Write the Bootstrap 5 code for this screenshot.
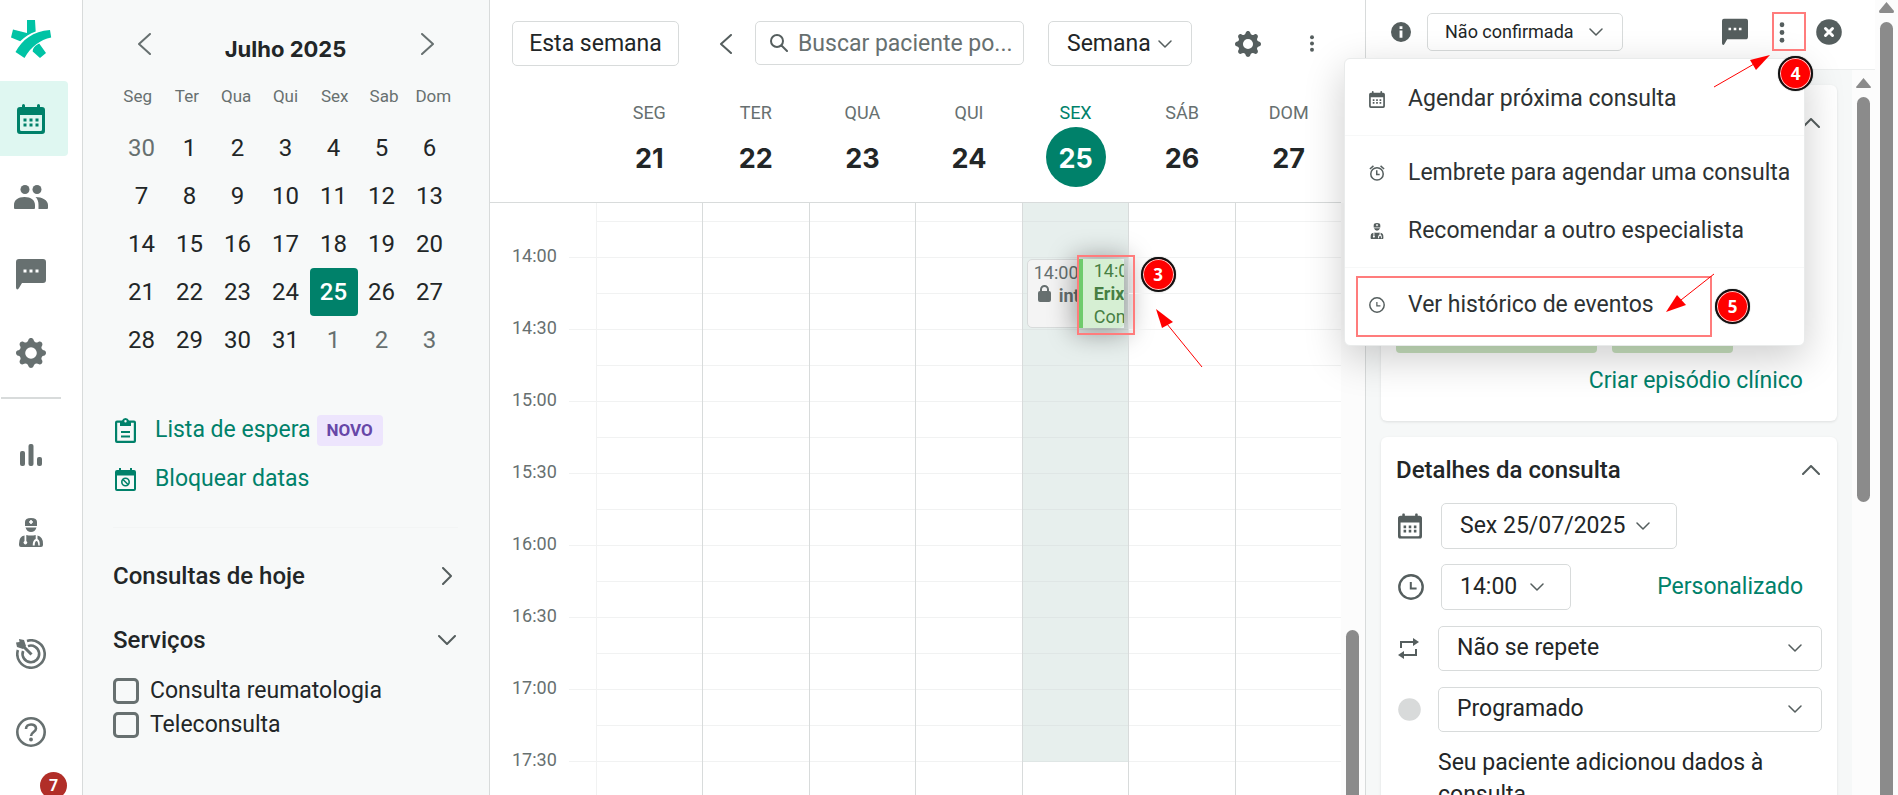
<!DOCTYPE html>
<html lang="pt-BR">
<head>
<meta charset="utf-8">
<meta name="viewport" content="width=device-width, initial-scale=1">
<title>Agenda</title>
<link href="https://cdn.jsdelivr.net/npm/bootstrap@5.3.0/dist/css/bootstrap.min.css" rel="stylesheet">
<style>
  :root { --teal: #00816a; --ink: #222627; --slate: #677070; --iron: #555e5e; --line: #d8dbdb; --faint: #f1f2f2; --mist: #f6f8f8; }
  body { font-family: Roboto, "Liberation Sans", sans-serif; font-size: 23px; line-height: 32px; color: var(--ink); background: #fff; }
  svg { display: block; flex: none; fill: currentColor; }
  button { color: inherit; }
  a { color: var(--teal); text-decoration: none; }
  .display-face { font-family: Inter, Roboto, sans-serif; font-weight: 700; }
  .plain-btn { background: none; border: 0; padding: 0; display: flex; align-items: center; justify-content: center; }
  .stroke { fill: none; stroke: currentColor; stroke-width: 2; stroke-linecap: round; stroke-linejoin: round; }

  /* icon rail */
  .rail { width: 83px; border-right: 1px solid var(--line); color: var(--slate); }
  .rail-logo { height: 81px; padding: 19px 0 0 10px; color: #00c3a5; }
  .rail-item { width: 68px; height: 75px; margin-bottom: 3px; padding-right: 6px; border-radius: 0 4px 4px 0; color: inherit; display: flex; align-items: center; justify-content: center; }
  .rail-item.active { background: #dff7f1; color: var(--teal); }
  .rail-rule { width: 60px; height: 2px; margin: 7px 0 18px 1px; background: var(--line); }
  .rail-gap { margin-top: 46px; }
  .count { right: 1px; top: 0; width: 27px; height: 27px; background: #b12e28; color: #fff; font-size: 16px; font-weight: 700; line-height: 27px; text-align: center; }

  /* left panel */
  .side { width: 407px; background: #f7f9f9; border-right: 1px solid var(--line); padding: 28px 31px 0 30px; }
  .month-title { font-size: 22px; padding-top: 10px; }
  .month-bar { padding: 0 15px; }
  .arrow-btn { width: 32px; height: 32px; color: var(--slate); }
  .week-names { display: grid; grid-template-columns: repeat(7, 1fr); font-size: 17px; line-height: 24px; color: var(--slate); text-align: center; }
  .mini-days { display: grid; grid-template-columns: repeat(7, 48px); justify-content: center; margin-top: 16px; font-size: 24px; }
  .mini-days button { height: 48px; border-radius: 4px; }
  .mini-days .out { color: var(--slate); }
  .mini-days .sel { background: var(--teal); color: #fff; font-weight: 500; }
  .side-links { margin-top: 50px; display: grid; gap: 17px; }
  .side-links svg { margin: 0 19px 0 2px; color: var(--teal); }
  .novo { background: #ede5fd; color: #6747a8; font-size: 17px; font-weight: 700; line-height: 31px; border-radius: 4px; padding: 0 10px; margin-left: 6px; }
  .side hr { margin: 32px 0; border-color: #e9ecec; }
  .side h2, .pane h2 { font-size: 24px; font-weight: 500; line-height: 32px; margin: 0; }
  .section-btn { width: 22px; height: 32px; color: var(--iron); }
  .services { margin-top: 18px; }
  .form-check-input.tick { width: 26px; height: 26px; margin: 0 11px 0 0; border: 3px solid var(--slate); border-radius: 5px; background-color: transparent; flex: none; }
  .service { height: 34px; }

  /* agenda */
  .agenda { min-width: 0; }
  .toolbar { padding: 21px 38px 0 22px; height: 88px; align-items: flex-start; }
  .boxed, .form-select.boxed { height: 45px; font-size: 23px; line-height: 30px; color: var(--ink); background-color: #fff; border: 1px solid var(--line); border-radius: 5px; padding: 5px 18px; }
  .boxed.today-btn { width: 167px; padding: 5px 0; }
  .form-select.boxed { background-image: url("data:image/svg+xml,%3csvg xmlns='http://www.w3.org/2000/svg' viewBox='0 0 14 8'%3e%3cpath fill='none' stroke='%23555e5e' stroke-width='1.5' stroke-linecap='round' stroke-linejoin='round' d='M1 1l6 6 6-6'/%3e%3c/svg%3e"); background-size: 14px 8px; background-position: right 19px center; }
  .form-select.boxed.view { width: 144px; }
  .form-select.boxed.date-pick, .form-select.boxed.time-pick { height: 46px; margin-left: 3px; background-position: right 26px center; }
  .form-select.boxed.date-pick { width: 236px; }
  .form-select.boxed.time-pick { width: 130px; padding-right: 0; }
  .form-select.status { height: 38px; font-size: 18px; line-height: 26px; padding: 5px 17px; width: 196px; }
  .search { height: 44px; border: 1px solid var(--line); border-radius: 5px; padding: 0 10px 0 14px; min-width: 0; color: var(--iron); }
  .search input { border: 0; outline: 0; min-width: 0; width: 100%; padding: 0; margin-left: 10px; height: 40px; line-height: 32px; color: var(--ink); }
  .search input::placeholder { color: var(--slate); opacity: 1; }
  .tool { height: 45px; color: var(--iron); }
  .tool-prev { width: 52px; }
  .tool-gear { width: 50px; margin-left: 31px; }
  .week-head { padding: 0 23px 0 106px; height: 115px; display: grid; grid-template-columns: repeat(7, 1fr); text-align: center; }
  .day-name { font-size: 18px; line-height: 24px; color: var(--slate); padding-top: 13px; height: 39px; }
  .day-num { font-size: 27px; line-height: 63px; width: 60px; height: 60px; margin: 0 auto; border-radius: 50%; }
  .today .day-name { color: var(--teal); }
  .today .day-num { background: var(--teal); color: #fff; }
  .slots { border-top: 1px solid var(--line); margin-top: -1px; margin-right: 24px; }
  .times { width: 106px; padding-top: 17px; font-size: 18px; color: var(--slate); flex: none; }
  .times div { height: 72px; padding-left: 22px; display: flex; align-items: center; }
  .times div::after { content: ""; flex: none; width: 27px; height: 1px; background: var(--faint); margin: 2px 0 0 auto; }
  .days { display: grid; grid-template-columns: repeat(7, 1fr); }
  .day { border-left: 1px solid var(--line); background: linear-gradient(var(--faint) 1px, transparent 1px) 0 18px / 100% 36px; position: relative; }
  .day:first-child { border-left-color: var(--faint); }
  .day-open { height: 559px; background: linear-gradient(#dfe6e5 1px, transparent 1px) 0 18px / 100% 36px #e7efed; }
  .event { position: absolute; top: 56px; height: 69px; font-size: 18px; line-height: 23px; overflow: hidden; white-space: nowrap; }
  .event-block { left: 4px; width: 52px; background: #f4f4f4; border: 1px solid var(--line); border-radius: 5px 0 0 5px; padding: 1px 6px; color: var(--slate); }
  .event-visit { left: 55px; right: 4px; background: #d6efd3; border-left: 5px solid #6fcb6c; border-radius: 0 5px 5px 0; padding-left: 11px; color: #477f43; }
  .event-shade { position: absolute; top: 56px; left: 55px; right: 4px; height: 69px; box-shadow: 0 2px 26px 4px rgba(0,0,0,.36); }

  /* scrollbars */
  .bar { background: #fcfcfc; color: #8b8b8b; display: flex; flex-direction: column; align-items: center; flex: none; }
  .thumb { width: 13px; background: #8b8b8b; border-radius: 7px; }
  .bar-agenda { position: absolute; right: 0; top: 203px; bottom: 0; width: 24px; padding-top: 427px; }
  .bar-agenda .thumb { flex: 1; border-radius: 7px 7px 0 0; margin-right: 1px; }
  .bar-inner { width: 23px; padding-top: 8px; }
  .bar-inner .thumb { height: 51vh; margin-top: 9px; }
  .bar-outer { width: 23px; padding-top: 2px; }
  .bar-outer .thumb { flex: 1; margin-top: 9px; border-radius: 7px 7px 0 0; }

  /* appointment pane */
  .pane { width: 510px; border-left: 1px solid var(--line); background: var(--mist); }
  .pane-head { height: 70px; background: #fff; border-bottom: 1px solid #eceeee; padding: 13px 33px 0 25px; color: var(--iron); align-items: flex-start; }
  .pane-head > * { height: 38px; }
  .dots-btn { width: 20px; }
  .panel { background: #fff; border-radius: 6px; box-shadow: 0 1px 3px rgba(0,0,0,.1); padding: 0 15px; }
  .panels { padding: 15px 15px 0 15px; }
  .panel-title { padding: 17px 0 2px; }
  .episodes { height: 336px; margin-bottom: 16px; padding-top: 22px; }
  .tags { display: flex; gap: 15px; margin-top: 182px; }
  .tag { height: 32px; background: #c9e2bf; border-radius: 4px; }
  .pane-link { padding-right: 19px; margin-left: auto; }
  .field { margin-top: 15px; height: 46px; }
  .glyph { width: 42px; flex: none; padding-left: 2px; color: var(--iron); }
  .note { margin: 15px 0 0 42px; }
  .menu { position: absolute; z-index: 5; left: -22px; top: 58px; width: 461px; background: #fff; border: 1px solid #e9ebeb; border-radius: 6px; box-shadow: 0 12px 40px rgba(0,0,0,.2); color: var(--iron); padding: 11px 0; }
  .menu button { color: #2d3233; width: 100%; height: 58px; padding-left: 24px; justify-content: flex-start; white-space: nowrap; }
  .menu button svg { width: 16px; color: var(--iron); margin-right: 23px; }
  .menu hr { margin: 7px 0 8px; border-color: #dfe2e2; }

  /* tutorial marks */
  .frame { position: absolute; border: 2px solid #ff7c7c; pointer-events: none; z-index: 6; }
  .step { position: absolute; z-index: 7; width: 35px; height: 35px; border-radius: 50%; background: #f00; color: #fff; border: 2px solid #111; box-shadow: inset 0 0 0 1px #fcc, 0 0 1px #555; font: 700 17px/32px "Noto Sans", sans-serif; text-align: center; }
  .pointer { position: absolute; z-index: 7; fill: #f00; stroke: #f00; }
  .frame-visit { left: 54px; top: 52px; width: 58px; height: 80px; }
  .step-visit { left: 118px; top: 54px; }
  .pointer-visit { left: 133px; top: 106px; }
  .frame-dots { left: 0; top: -1px; width: 34px; height: 39px; }
  .step-dots { left: 6px; top: 43px; }
  .pointer-dots { left: -58px; top: 41px; }
  .frame-log { left: 11px; top: 217px; width: 356px; height: 61px; }
  .step-log { left: 370px; top: 230px; }
  .pointer-log { left: 321px; top: 214px; }
</style>
</head>
<body class="vh-100 overflow-hidden d-flex">

<svg width="0" height="0" class="position-absolute" aria-hidden="true">
  <symbol id="cal" viewBox="0 0 28 30"><path fill-rule="evenodd" d="M3 3h2V1.500a1.500 1.500 0 0 1 3 0V3h12V1.500a1.500 1.500 0 0 1 3 0V3h2a3 3 0 0 1 3 3v21a3 3 0 0 1-3 3H3a3 3 0 0 1-3-3V6a3 3 0 0 1 3-3zm0 8v14.500A1.500 1.500 0 0 0 4.500 27h19a1.500 1.500 0 0 0 1.500-1.500V11zM6.500 14.500h3v3h-3zm6 0h3v3h-3zm6 0h3v3h-3zm-12 5h3v3h-3zm6 0h3v3h-3zm6 0h3v3h-3z"/></symbol>
  <symbol id="gear" viewBox="0 0 16 16"><path d="M9.405 1.050c-.413-1.400-2.397-1.400-2.810 0l-.1.340a1.464 1.464 0 0 1-2.105.872l-.310-.170c-1.283-.698-2.686.705-1.987 1.987l.169.311c.446.820.023 1.841-.872 2.105l-.340.100c-1.400.413-1.400 2.397 0 2.810l.340.100a1.464 1.464 0 0 1 .872 2.105l-.170.310c-.698 1.283.705 2.686 1.987 1.987l.311-.169a1.464 1.464 0 0 1 2.105.872l.100.340c.413 1.400 2.397 1.400 2.810 0l.100-.340a1.464 1.464 0 0 1 2.105-.872l.310.170c1.283.698 2.686-.705 1.987-1.987l-.169-.311a1.464 1.464 0 0 1 .872-2.105l.340-.100c1.400-.413 1.400-2.397 0-2.810l-.340-.100a1.464 1.464 0 0 1-.872-2.105l.170-.310c.698-1.283-.705-2.686-1.987-1.987l-.311.169a1.464 1.464 0 0 1-2.105-.872l-.100-.340zM8 11.100a3.100 3.100 0 1 1 0-6.200 3.100 3.100 0 0 1 0 6.200z" fill-rule="evenodd"/></symbol>
  <symbol id="chat" viewBox="0 0 30 31"><path fill-rule="evenodd" d="M3 0h24a3 3 0 0 1 3 3v18a3 3 0 0 1-3 3H6l-3 5c-1 2-3 2-3-1V3a3 3 0 0 1 3-3zm4.500 10.500v3h3v-3zm6 0v3h3v-3zm6 0v3h3v-3z"/></symbol>
  <symbol id="doctor" viewBox="0 0 24 29"><path fill-rule="evenodd" d="M6 8V4q0-4 6-4t6 4v4zm5.200-6v1.300H10v1.400h1.200V6h1.600V4.700H14V3.300h-1.200V2zM6.500 9.500h11Q16 14 12 14T6.500 9.500zM0 26q0-8 5.500-8.500V23a1.800 1.800 0 1 0 1.800 0v-6q4.700 1 9.400 0v4q-3 1-3 6.500h2c0-3 .8-4.500 1.800-4.500s1.800 1.500 1.800 4.500h1.500c0-4-.5-5.500-2.300-6.500v-3.500Q24 18.500 24 26v1q0 2-2 2H2q-2 0-2-2z"/></symbol>
  <symbol id="clock" viewBox="0 0 26 26"><circle cx="13" cy="13" r="11.700" fill="none" stroke="currentColor" stroke-width="2.400"/><path d="M12.800 8v6.600h5.800" fill="none" stroke="currentColor" stroke-width="2"/></symbol>
  <symbol id="dots" viewBox="0 0 5 19"><circle cx="2.500" cy="2.500" r="2.200"/><circle cx="2.500" cy="9.500" r="2.200"/><circle cx="2.500" cy="16.500" r="2.200"/></symbol>
</svg>

<nav class="rail flex-shrink-0 overflow-hidden" aria-label="Principal">
  <div class="rail-logo"><svg width="42" height="40" viewBox="10 19 42 40"><path d="M27 20h8l.7 11.500c-6 2-11 5.500-15.500 9.700L11 37.500l2-8 14 3.500zM50 30l1.200 7.500C40 40 31.500 46 24.500 58L15.500 52C22 40 33 31 50 30zM39.200 43.500 46 53l-6 5-7.300-6.500c0-3.500 3-6.500 6.500-8z"/></svg></div>
  <a href="#" class="rail-item active" aria-label="Agenda"><svg width="28" height="30"><use href="#cal"/></svg></a>
  <a href="#" class="rail-item" aria-label="Pacientes"><svg width="34" height="24" viewBox="0 0 34 24"><circle cx="11" cy="4.500" r="4.500"/><circle cx="23" cy="4.500" r="4.500"/><path d="M0 20c0-5 4-8 10.500-8S21 15 21 20v3q0 1-1 1H1q-1 0-1-1zM21.500 12C28 12 34 15 34 20v3q0 1-1 1h-8.500v-4c0-3.500-1-6-3-8z"/></svg></a>
  <a href="#" class="rail-item" aria-label="Mensagens"><svg width="30" height="31"><use href="#chat"/></svg></a>
  <a href="#" class="rail-item" aria-label="Configurações"><svg width="30" height="30"><use href="#gear"/></svg></a>
  <div class="rail-rule"></div>
  <a href="#" class="rail-item" aria-label="Estatísticas"><svg width="22" height="22" viewBox="0 0 22 22"><rect y="7" width="5" height="15" rx="2"/><rect x="8.500" width="5" height="22" rx="2"/><rect x="17" y="13" width="5" height="9" rx="2"/></svg></a>
  <a href="#" class="rail-item" aria-label="Especialistas"><svg width="24" height="29"><use href="#doctor"/></svg></a>
  <a href="#" class="rail-item rail-gap" aria-label="Campanhas"><svg width="30" height="30" viewBox="0 0 30 30"><g fill="none" stroke="currentColor" stroke-width="2.600"><path d="M11 1.900A13.700 13.700 0 1 1 1.900 11"/><path d="M12 7.100A8.300 8.300 0 1 1 7.100 12"/><path d="M6 6l9.500 9.500" stroke-width="3"/></g><path d="M0 3.500 3.500 3 3 0l5 1 2 6-3 3-6-2z"/></svg></a>
  <a href="#" class="rail-item" aria-label="Ajuda"><svg width="30" height="30" viewBox="0 0 30 30"><circle cx="15" cy="15" r="13.700" fill="none" stroke="currentColor" stroke-width="2.600"/><path d="M10 12c0-6 10-6 10-.5 0 3.500-5 3.500-5 7.500" fill="none" stroke="currentColor" stroke-width="2.600"/><circle cx="15" cy="22.500" r="1.900"/></svg></a>
  <a href="#" class="rail-item position-relative" aria-label="Notificações"><svg width="26" height="30" viewBox="0 0 26 30"><path d="M11 2a2 2 0 0 1 4 0v2q7 2 7 9v8l4 4H0l4-4v-8q0-7 7-9zM10 27h6q0 3-3 3t-3-3z"/></svg><span class="count position-absolute rounded-circle">7</span></a>
</nav>

<aside class="side flex-shrink-0 overflow-hidden">
  <div class="month-bar d-flex justify-content-between">
    <button class="plain-btn arrow-btn" aria-label="Mês anterior"><svg width="13" height="22" class="stroke" viewBox="0 0 13 22"><path d="M12 1 1 11l11 10"/></svg></button>
    <div class="month-title display-face lh-1">Julho 2025</div>
    <button class="plain-btn arrow-btn" aria-label="Próximo mês"><svg width="13" height="22" class="stroke" viewBox="0 0 13 22"><path d="M1 1l11 10L1 21"/></svg></button>
  </div>
  <div class="week-names mt-4"><span>Seg</span><span>Ter</span><span>Qua</span><span>Qui</span><span>Sex</span><span>Sab</span><span>Dom</span></div>
  <div class="mini-days" id="miniDays"></div>
  <div class="side-links">
    <div class="d-flex align-items-center"><svg width="21" height="25" viewBox="0 0 21 25"><path fill-rule="evenodd" d="M2 2.500h5Q8 0 10.500 0T14 2.500h5a2 2 0 0 1 2 2V23a2 2 0 0 1-2 2H2a2 2 0 0 1-2-2V4.500a2 2 0 0 1 2-2zm.2 2.300v18h16.600v-18H16V8H5V4.800zM6 13h9v2H6zm0 4.500h9v2H6zM10.500 2a1.200 1.200 0 1 0 0 2.400 1.200 1.200 0 0 0 0-2.400z"/></svg><a href="#">Lista de espera</a><span class="novo">NOVO</span></div>
    <div class="d-flex align-items-center"><svg width="21" height="23" viewBox="0 0 21 23"><path fill-rule="evenodd" d="M2 2h2V0h2v2h9V0h2v2h2a2 2 0 0 1 2 2v17a2 2 0 0 1-2 2H2a2 2 0 0 1-2-2V4a2 2 0 0 1 2-2zm0 5.500V21h17V7.500z"/><circle cx="10.500" cy="14" r="3.700" fill="none" stroke="currentColor" stroke-width="1.600"/><path d="M8 11.500l5 5" stroke="currentColor" stroke-width="1.600"/></svg><a href="#">Bloquear datas</a></div>
  </div>
  <hr>
  <div class="d-flex justify-content-between align-items-center"><h2>Consultas de hoje</h2><button class="plain-btn section-btn" aria-label="Abrir consultas"><svg width="10" height="18" class="stroke" viewBox="0 0 10 18"><path d="M1 1l8 8-8 8"/></svg></button></div>
  <div class="d-flex justify-content-between align-items-center mt-4 pt-2"><h2>Serviços</h2><button class="plain-btn section-btn" aria-label="Recolher serviços"><svg width="18" height="10" class="stroke" viewBox="0 0 18 10"><path d="M1 1l8 8 8-8"/></svg></button></div>
  <div class="services">
    <div class="service d-flex align-items-center"><input class="form-check-input tick" type="checkbox" id="s1"><label for="s1">Consulta reumatologia</label></div>
    <div class="service d-flex align-items-center"><input class="form-check-input tick" type="checkbox" id="s2"><label for="s2">Teleconsulta</label></div>
  </div>
</aside>

<main class="agenda flex-grow-1 d-flex flex-column overflow-hidden position-relative">
  <div class="toolbar d-flex flex-shrink-0">
    <button class="boxed today-btn flex-shrink-0">Esta semana</button>
    <button class="plain-btn tool tool-prev flex-shrink-0 ms-4" aria-label="Semana anterior"><svg width="20" height="20" class="stroke" viewBox="0 0 20 20"><path d="M12 1 2 10l10 9"/></svg></button>
    <label class="search d-flex align-items-center flex-grow-1"><svg width="18" height="18" viewBox="0 0 18 18" class="stroke"><circle cx="7" cy="7" r="6"/><path d="M11.500 11.500l5.500 5.500"/></svg><input type="text" aria-label="Buscar paciente" placeholder="Buscar paciente po..."></label>
    <select class="form-select boxed view flex-shrink-0 ms-4" aria-label="Visualização"><option>Semana</option></select>
    <button class="plain-btn tool tool-gear flex-shrink-0" aria-label="Configurar agenda"><svg width="26" height="26"><use href="#gear"/></svg></button>
    <button class="plain-btn tool px-2 ms-4" aria-label="Mais opções"><svg width="14" height="17" viewBox="0 0 5 19"><use href="#dots"/></svg></button>
  </div>
  <div class="week-head flex-shrink-0">
    <div><div class="day-name">SEG</div><div class="day-num display-face">21</div></div>
    <div><div class="day-name">TER</div><div class="day-num display-face">22</div></div>
    <div><div class="day-name">QUA</div><div class="day-num display-face">23</div></div>
    <div><div class="day-name">QUI</div><div class="day-num display-face">24</div></div>
    <div class="today"><div class="day-name">SEX</div><div class="day-num display-face">25</div></div>
    <div><div class="day-name">SÁB</div><div class="day-num display-face">26</div></div>
    <div><div class="day-name">DOM</div><div class="day-num display-face">27</div></div>
  </div>
  <div class="slots d-flex flex-grow-1">
    <div class="times"><div>14:00</div><div>14:30</div><div>15:00</div><div>15:30</div><div>16:00</div><div>16:30</div><div>17:00</div><div>17:30</div></div>
    <div class="days flex-grow-1">
      <div class="day"></div><div class="day"></div><div class="day"></div><div class="day"></div>
      <div class="day">
        <div class="day-open"></div>
        <div class="event event-block">14:00<br><svg width="13" height="17" viewBox="0 0 13 17" class="d-inline-block align-baseline me-2 ms-1"><path fill-rule="evenodd" d="M2 6V4.500a4.500 4.500 0 0 1 9 0V6q2 0 2 2v7q0 2-2 2H2q-2 0-2-2V8q0-2 2-2zm2 0h5V4.500a2.500 2.500 0 0 0-5 0z"/></svg><b>int</b></div>
        <div class="event-shade"></div>
        <div class="event event-visit">14:00<br><b>Erix</b><br>Con</div>
        <div class="frame frame-visit"></div>
        <div class="step step-visit">3</div>
        <svg class="pointer pointer-visit" width="52" height="64" viewBox="0 0 52 64"><path d="M0 0l17 13-11 6z" stroke="none"/><path d="M11 15l35 43"/></svg>
      </div>
      <div class="day"></div><div class="day"></div>
    </div>
  </div>
  <div class="bar bar-agenda"><div class="thumb"></div></div>
</main>

<section class="pane flex-shrink-0 d-flex flex-column position-relative">
  <div class="pane-head d-flex flex-shrink-0">
    <svg width="20" viewBox="0 0 21 21"><path fill-rule="evenodd" d="M10.500 0a10.500 10.500 0 1 1 0 21 10.500 10.500 0 0 1 0-21zM9 4.500v2.800h3V4.500zM9 9v7.500h3V9z"/></svg>
    <select class="form-select boxed status ms-3" aria-label="Status"><option>Não confirmada</option></select>
    <svg width="26" class="ms-auto" viewBox="0 0 30 31" role="img" aria-label="Mensagem"><use href="#chat"/></svg>
    <div class="position-relative ms-4">
      <button class="plain-btn dots-btn h-100" aria-label="Opções da consulta"><svg width="6" height="21" viewBox="0 0 5 19"><use href="#dots"/></svg></button>
      <div class="frame frame-dots"></div>
      <div class="step step-dots">4</div>
      <svg class="pointer pointer-dots" width="58" height="34" viewBox="0 0 58 34"><path d="M56 1 42 16l-6-10z" stroke="none"/><path d="M0 33 40 10"/></svg>
    </div>
    <button class="plain-btn ms-4" aria-label="Fechar"><svg width="26" height="26" viewBox="0 0 26 26"><circle cx="13" cy="13" r="12.800"/><path d="M9.500 9.500l7 7m0-7-7 7" stroke="#fff" stroke-width="3" stroke-linecap="round"/></svg></button>
  </div>

  <div class="menu">
    <button class="plain-btn"><svg height="17" viewBox="0 0 28 30"><use href="#cal"/></svg>Agendar próxima consulta</button>
    <hr>
    <button class="plain-btn"><svg height="18" viewBox="0 0 18 19"><g fill="none" stroke="currentColor" stroke-width="1.700"><circle cx="9" cy="10.500" r="7"/><path d="M8.700 6.500v4.700H12M1 5l4-3.500M17 5l-4-3.500"/></g></svg>Lembrete para agendar uma consulta</button>
    <button class="plain-btn"><svg height="16" viewBox="0 0 24 29"><use href="#doctor"/></svg>Recomendar a outro especialista</button>
    <hr>
    <button class="plain-btn"><svg height="16" viewBox="0 0 26 26"><use href="#clock"/></svg>Ver histórico de eventos</button>
    <div class="frame frame-log"></div>
    <div class="step step-log">5</div>
    <svg class="pointer pointer-log" width="52" height="42" viewBox="0 0 52 42"><path d="M0 39 11 22l9 10z" stroke="none"/><path d="M48 1 15 27"/></svg>
  </div>

  <div class="d-flex flex-grow-1 overflow-hidden">
    <div class="panels flex-grow-1">
      <div class="panel episodes">
        <div class="d-flex justify-content-end"><button class="plain-btn section-btn" aria-label="Recolher"><svg width="18" height="10" viewBox="0 0 18 10" class="stroke"><path d="M1 9l8-8 8 8"/></svg></button></div>
        <div class="tags"><span class="tag col-6 flex-shrink-1" style="width:47.300%"></span><span class="tag" style="width:28.200%"></span></div>
        <div class="d-flex mt-2 pt-1"><a href="#" class="pane-link">Criar episódio clínico</a></div>
      </div>
      <div class="panel">
        <div class="panel-title d-flex justify-content-between align-items-center"><h2>Detalhes da consulta</h2><button class="plain-btn section-btn" aria-label="Recolher detalhes"><svg width="18" height="10" viewBox="0 0 18 10" class="stroke"><path d="M1 9l8-8 8 8"/></svg></button></div>
        <div class="field d-flex align-items-center"><span class="glyph"><svg width="24" height="26" viewBox="0 0 28 30"><use href="#cal"/></svg></span><select class="form-select boxed date-pick" aria-label="Data"><option>Sex 25/07/2025</option></select></div>
        <div class="field d-flex align-items-center"><span class="glyph"><svg width="26" height="26"><use href="#clock"/></svg></span><select class="form-select boxed time-pick" aria-label="Hora"><option>14:00</option></select><a href="#" class="pane-link">Personalizado</a></div>
        <div class="field d-flex align-items-center"><span class="glyph"><svg width="21" height="21" viewBox="0 0 21 21"><path d="M3 10V4h13M18 11v6H5" fill="none" stroke="currentColor" stroke-width="2"/><path d="M15 0l6 4-6 4zM6 13l-6 4 6 4z"/></svg></span><select class="form-select boxed" aria-label="Repetição"><option>Não se repete</option></select></div>
        <div class="field d-flex align-items-center"><span class="glyph"><svg width="23" height="23" viewBox="0 0 23 23" color="#d8dada"><circle cx="11.500" cy="11.500" r="11.300"/></svg></span><select class="form-select boxed" aria-label="Situação"><option>Programado</option></select></div>
        <p class="note">Seu paciente adicionou dados à consulta</p>
      </div>
    </div>
    <div class="bar bar-inner"><svg width="15" height="10" viewBox="0 0 15 10"><path d="M7.500 0 15 9q0 1-1 1H1q-1 0-1-1z"/></svg><div class="thumb"></div></div>
  </div>
</section>
<div class="bar bar-outer"><svg width="15" height="11" viewBox="0 0 15 11"><path d="M7.500 0 15 9q0 2-1 2H1q-1 0-1-2z"/></svg><div class="thumb"></div></div>

<script>
  // Mini calendar: July 2025 with the neighbouring days of June and August.
  const days = [30, ...Array.from({length: 31}, (_, i) => i + 1), 1, 2, 3];
  document.getElementById('miniDays').innerHTML = days.map((d, i) => {
    const cls = i === 0 || i > 31 ? 'out' : d === 25 ? 'sel' : '';
    return `<button class="plain-btn ${cls}">${d}</button>`;
  }).join('');
</script>
<script src="https://cdn.jsdelivr.net/npm/bootstrap@5.3.0/dist/js/bootstrap.bundle.min.js"></script>
</body>
</html>
